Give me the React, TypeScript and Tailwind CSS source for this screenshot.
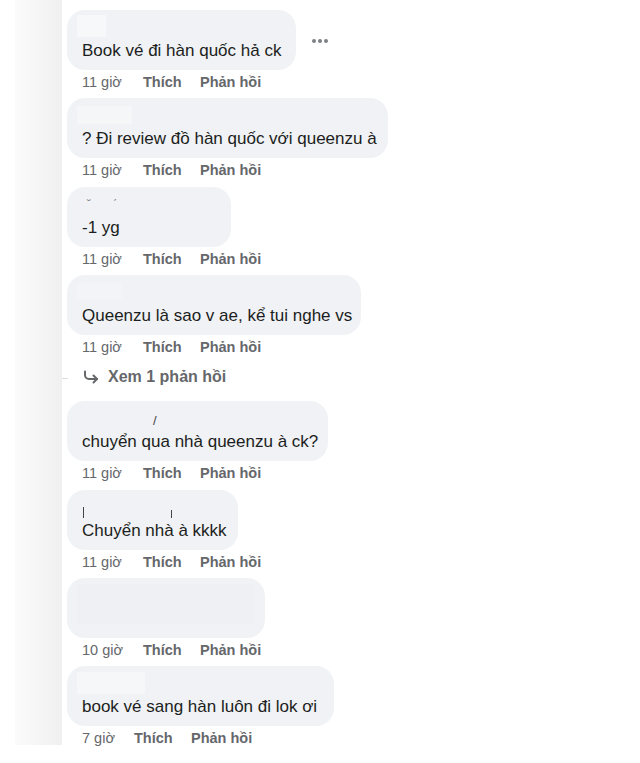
import { ReactNode } from 'react';

type Comment = {
  text?: string;
  width: number;
  time: string;
  name?: ReactNode;
  more?: boolean;
  extra?: boolean;
};

const comments: Comment[] = [
  { text: 'Book vé đi hàn quốc hả ck', width: 229, time: '11 giờ', more: true, name: <div className="w-[29px] h-[22px] -mt-[3px] -ml-[5px] bg-[#f7f8fa]" /> },
  { text: '? Đi review đồ hàn quốc với queenzu à', width: 321, time: '11 giờ', extra: true, name: <div className="w-[55px] h-[18px] -ml-[5px] bg-[#f5f6f8]" /> },
  {
    text: '-1 yg',
    width: 164,
    time: '11 giờ',
    name: (
      <div className="relative h-full">
        <span className="absolute left-[5px] top-[4px] text-[12px] leading-none text-[#8a8c90]">˘</span>
        <span className="absolute left-[31px] top-[4px] text-[12px] leading-none text-[#8a8c90]">ˊ</span>
      </div>
    ),
  },
  { text: 'Queenzu là sao v ae, kể tui nghe vs', width: 294, time: '11 giờ', name: <div className="w-[45px] h-[16px] -ml-[5px] bg-[#f3f4f7]" /> },
];

const comments2: Comment[] = [
  {
    text: 'chuyển qua nhà queenzu à ck?',
    width: 261,
    time: '11 giờ',
    extra: true,
    name: (
      <div className="relative h-full">
        <span className="absolute left-[71px] top-[5px] text-[13px] leading-none text-[#444]">/</span>
      </div>
    ),
  },
  {
    text: 'Chuyển nhà à kkkk',
    width: 171,
    time: '11 giờ',
    name: (
      <div className="relative h-full">
        <span className="absolute left-[1px] top-[9px] w-[1px] h-[11px] bg-[#444]" />
        <span className="absolute left-[89px] top-[12px] w-[1px] h-[8px] bg-[#444]" />
      </div>
    ),
  },
  { width: 198, time: '10 giờ', name: <div className="w-[178px] h-[40px] -ml-[5px] -mt-[2px] bg-[#eef0f3]" /> },
  { text: 'book vé sang hàn luôn đi lok ơi', width: 267, time: '7 giờ', name: <div className="w-[68px] h-[22px] -mt-[2px] -ml-[5px] bg-[#f6f7f9]" /> },
];

function Dots() {
  return (
    <svg width="18" height="6" viewBox="0 0 18 6" className="mt-[28px] ml-[15px]">
      <circle cx="3" cy="3" r="2" fill="#7d8085" />
      <circle cx="9" cy="3" r="2" fill="#7d8085" />
      <circle cx="15" cy="3" r="2" fill="#7d8085" />
    </svg>
  );
}

function CommentItem({ c }: { c: Comment }) {
  const short = c.time === '7 giờ';
  return (
    <div className={`flex flex-col ${c.extra ? 'mb-[8px]' : 'mb-[7px]'}`}>
      <div className="flex items-start">
        <div
          className="h-[60px] rounded-[18px] bg-[#f0f2f5] pl-[15px] pr-[12px] pt-[8px] pb-[8px] flex flex-col"
          style={{ width: c.width }}
        >
          <div className="h-[22px]">{c.name}</div>
          {c.text && (
            <div className="text-[17px] leading-[22px] text-[#1c1e21] whitespace-nowrap">{c.text}</div>
          )}
        </div>
        {c.more && <Dots />}
      </div>
      <div className="mt-[3px] h-[18px] flex items-center pl-[15px] text-[14.5px] leading-[18px] text-[#65676b]">
        <span className={short ? 'w-[52px]' : 'w-[61px]'}>{c.time}</span>
        <span className="font-bold w-[57px]">Thích</span>
        <span className="font-bold">Phản hồi</span>
      </div>
    </div>
  );
}

export default function App() {
  return (
    <div className="w-[640px] h-[763px] bg-white flex font-['Liberation_Sans',Arial,sans-serif] overflow-hidden">
      <div className="ml-[15px] w-[47px] h-[745px] bg-linear-to-r from-[#fbfbfb] to-[#f0f0f0]" />
      <div className="ml-[5px] pt-[10px] flex flex-col">
        {comments.map((c, i) => (
          <CommentItem key={i} c={c} />
        ))}
        <div className="relative h-[38px] pt-[4px] flex items-start self-start">
          <div className="absolute -left-[5px] top-[15px] w-[6px] h-[1px] bg-[#dadde1]" />
          <div className="flex items-center h-[20px] pl-[16px] gap-[9px] text-[16px] font-semibold text-[#65676b]">
            <svg width="16" height="14" viewBox="0 0 16 14" fill="none">
              <path d="M2 1.5v3.5a4 4 0 0 0 4 4h8" stroke="#65676b" strokeWidth="2" strokeLinecap="round" />
              <path d="M10.5 5.5L14 9l-3.5 3.5" stroke="#65676b" strokeWidth="2" strokeLinecap="round" strokeLinejoin="round" />
            </svg>
            <span>Xem 1 phản hồi</span>
          </div>
        </div>
        {comments2.map((c, i) => (
          <CommentItem key={i} c={c} />
        ))}
      </div>
    </div>
  );
}
